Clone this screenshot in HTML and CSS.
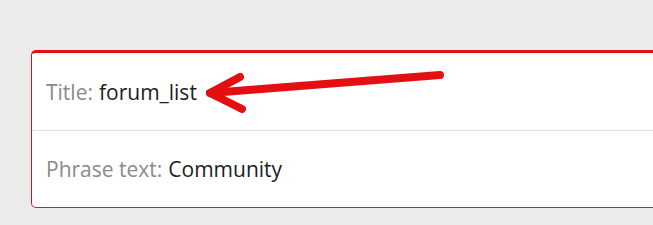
FILE: index.html
```html
<!DOCTYPE html>
<html lang="en">

<head>
    <meta charset="utf-8">
    <title>Phrase</title>
    <link rel="stylesheet" href="styles.css">
</head>

<body>
    <div class="card">
        <div class="row">
            <span class="label">Title:</span> <span class="value">forum_list</span>
            <svg class="arrow" width="260" height="50" viewBox="0 0 260 50">
                <g fill="none" stroke="#e30f13" stroke-width="8" stroke-linecap="round" stroke-linejoin="round">
                    <path d="M240 22 L10 40" />
                    <path d="M40 24 L10 40 L42 56" />
                </g>
            </svg>
        </div>
        <div class="row">
            <span class="label">Phrase text:</span> <span class="value">Community</span>
        </div>
    </div>
</body>

</html>
```

FILE: styles.css
```css
* {
    margin: 0;
    padding: 0;
    box-sizing: border-box;
}

body {
    width: 100%;
    height: 100vh;
    background: #ebebeb;
    font-family: "Open Sans", sans-serif;
    padding: 50px 0 0 31px;
    overflow: hidden;
}

.card {
    width: 640px;
    background: #fff;
    border: 1px solid #d8141a;
    border-top: 3px solid #e30f13;
    border-bottom-color: #c0262b;
    border-radius: 5px;
}

.row {
    position: relative;
    height: 77px;
    display: flex;
    align-items: center;
    padding-left: 14px;
    font-size: 21px;
    gap: 6px;
}

.row + .row {
    border-top: 1px solid #dedede;
    height: 77px;
}

.label {
    color: #8a8a8a;
}

.value {
    color: #1d1d1d;
}

.arrow {
    position: absolute;
    left: 168px;
    top: 0;
    overflow: visible;
}
```
